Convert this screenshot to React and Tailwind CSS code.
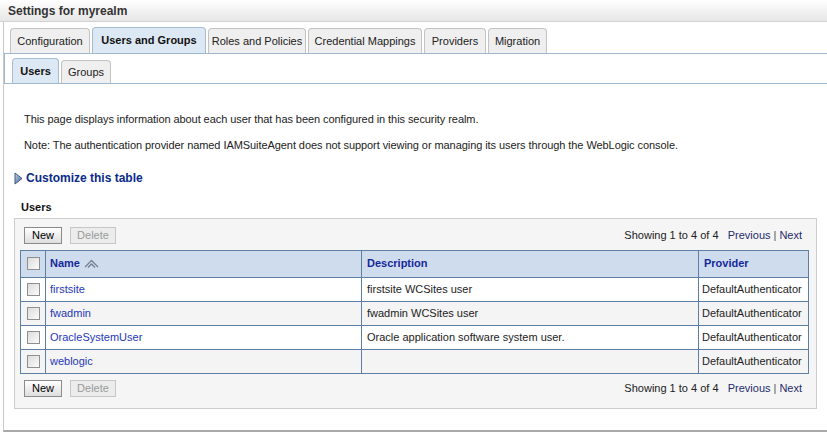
import { useState } from 'react'

const tabs = [
  { label: 'Configuration', w: 'w-[80px]' },
  { label: 'Users and Groups', w: 'w-[114px]' },
  { label: 'Roles and Policies', w: 'w-[98px]' },
  { label: 'Credential Mappings', w: 'w-[114px]' },
  { label: 'Providers', w: 'w-[62px]' },
  { label: 'Migration', w: 'w-[59px]' },
]

const subTabs = [
  { label: 'Users', w: 'w-[47px]' },
  { label: 'Groups', w: 'w-[50px]' },
]

const users = [
  { name: 'firstsite', desc: 'firstsite WCSites user', provider: 'DefaultAuthenticator' },
  { name: 'fwadmin', desc: 'fwadmin WCSites user', provider: 'DefaultAuthenticator' },
  { name: 'OracleSystemUser', desc: 'Oracle application software system user.', provider: 'DefaultAuthenticator' },
  { name: 'weblogic', desc: '', provider: 'DefaultAuthenticator' },
]

function Checkbox() {
  return (
    <span className="block w-[13px] h-[13px] border border-[#8e8f8f] bg-gradient-to-br from-[#dcdcdc] to-[#fbfbfb]" />
  )
}

function SortIcon() {
  return (
    <svg width="15" height="10" viewBox="0 0 15 10" className="ml-[4px]">
      <path d="M1 8 L7.5 1.5 L14 8" fill="none" stroke="#6f7f95" strokeWidth="1.3" strokeLinejoin="round" />
      <path d="M4 8.5 L7.5 5 L11 8.5" fill="none" stroke="#6f7f95" strokeWidth="1.3" strokeLinejoin="round" />
    </svg>
  )
}

function ButtonBar() {
  return (
    <div className="flex items-center justify-between">
      <div className="flex items-center gap-[8px]">
        <button className="h-[17px] w-[38px] border border-[#8b8b8b] bg-gradient-to-b from-[#ffffff] to-[#dedede] text-[11px] text-black leading-none">
          New
        </button>
        <button disabled className="h-[17px] w-[46px] border border-[#c6c6c6] bg-[#ececec] text-[11px] text-[#9a9a9a] leading-none">
          Delete
        </button>
      </div>
      <div className="text-[11px] text-[#222] pr-[7px]">
        Showing 1 to 4 of 4&nbsp;&nbsp; <span className="text-[#1f2b6e]">Previous</span>
        <span className="mx-[3px] text-[#555]">|</span>
        <span className="text-[#1f2b6e]">Next</span>
      </div>
    </div>
  )
}

export default function App() {
  const [active, setActive] = useState('Users and Groups')
  const [sub, setSub] = useState('Users')

  return (
    <div className="w-[827px] h-[432px] bg-white overflow-hidden" style={{ fontFamily: '"Liberation Sans", Arial, sans-serif' }}>
      {/* Title bar */}
      <div className="h-[22px] bg-gradient-to-b from-white to-[#e6e6e6] border-b border-[#d3d3d3] flex items-center pl-[8px]">
        <span className="text-[12px] font-bold text-[#333]">Settings for myrealm</span>
      </div>

      {/* Page frame */}
      <div className="ml-[3px] h-[410px] border-l border-b-2 border-l-[#c9c9c9] border-b-[#a9a9a9]">
        {/* Main tabs */}
        <div className="flex items-end gap-[2px] pl-[6px] pt-[5px] border-b border-[#9fb8cd]">
          {tabs.map((t) => {
            const on = t.label === active
            return (
              <button
                key={t.label}
                onClick={() => setActive(t.label)}
                className={
                  on
                    ? `${t.w} h-[26px] rounded-t-[4px] border border-b-0 border-[#a6bdd1] bg-[#dce8f4] text-[11px] font-bold text-[#111] whitespace-nowrap`
                    : `${t.w} h-[25px] rounded-t-[4px] border border-b-0 border-[#c3c3c3] bg-[#efefef] text-[11px] text-[#222] whitespace-nowrap`
                }
              >
                {t.label}
              </button>
            )
          })}
        </div>

        {/* Sub tabs */}
        <div className="flex items-end gap-[2px] pl-[7px] pt-[4px] border-l border-b border-[#9fb8cd]">
          {subTabs.map((t) => {
            const on = t.label === sub
            return (
              <button
                key={t.label}
                onClick={() => setSub(t.label)}
                className={
                  on
                    ? `${t.w} h-[25px] rounded-t-[4px] border border-b-0 border-[#a6bdd1] bg-[#dce8f4] text-[11px] font-bold text-[#111]`
                    : `${t.w} h-[23px] rounded-t-[4px] border border-b-0 border-[#c3c3c3] bg-[#efefef] text-[11px] text-[#222]`
                }
              >
                {t.label}
              </button>
            )
          })}
        </div>

        {/* Intro text */}
        <div className="pl-[20px] pt-[28px] text-[11px] text-[#222] leading-[14px] tracking-[-0.07px]">
          <p>This page displays information about each user that has been configured in this security realm.</p>
          <p className="mt-[12px]">
            Note: The authentication provider named IAMSuiteAgent does not support viewing or managing its users through the WebLogic console.
          </p>
        </div>

        {/* Customize */}
        <div className="flex items-center gap-[3px] pl-[10px] mt-[17px]">
          <svg width="9" height="13" viewBox="0 0 9 13">
            <defs>
              <linearGradient id="tri" x1="0" y1="0" x2="1" y2="1">
                <stop offset="0" stopColor="#c9d6ea" />
                <stop offset="1" stopColor="#3d5a8f" />
              </linearGradient>
            </defs>
            <path d="M1 1 L8 6.5 L1 12 Z" fill="url(#tri)" stroke="#3f5683" strokeWidth="1" strokeLinejoin="round" />
          </svg>
          <span className="text-[12px] font-bold text-[#0a2a8a]">Customize this table</span>
        </div>

        {/* Users section */}
        <div className="pl-[17px] mt-[12px] text-[11px] font-bold text-[#111]">Users</div>

        <div className="ml-[10px] mr-[10px] mt-[2px] bg-[#f5f5f5] border border-[#cdcdcd] pt-[8px] pb-[11px] pl-[5px] pr-[7px]">
          <div className="pl-[4px]">
            <ButtonBar />
          </div>

          <table className="w-[789px] mt-[6px] border-collapse text-[11px]">
            <thead>
              <tr className="h-[27px] bg-[#cfdcee]">
                <th className="w-[25px] border border-[#5d7fa3]">
                  <div className="flex justify-center"><Checkbox /></div>
                </th>
                <th className="w-[316px] border border-[#5d7fa3] text-left pl-[4px]">
                  <div className="flex items-center font-bold text-[#14289a] text-[11px]">
                    Name <SortIcon />
                  </div>
                </th>
                <th className="w-[337px] border border-[#5d7fa3] text-left pl-[5px] font-bold text-[#14289a]">Description</th>
                <th className="border border-[#5d7fa3] text-left pl-[5px] font-bold text-[#14289a]">Provider</th>
              </tr>
            </thead>
            <tbody>
              {users.map((u, i) => (
                <tr key={u.name} className={i % 2 === 0 ? 'h-[24px] bg-white' : 'h-[24px] bg-[#f4f4f4]'}>
                  <td className="border border-[#5d7fa3]">
                    <div className="flex justify-center"><Checkbox /></div>
                  </td>
                  <td className="border border-[#5d7fa3] pl-[4px] text-[#2538b8]">{u.name}</td>
                  <td className="border border-[#5d7fa3] pl-[5px] text-[#222]">{u.desc}</td>
                  <td className="border border-[#5d7fa3] pl-[3px] text-[#222]">{u.provider}</td>
                </tr>
              ))}
            </tbody>
          </table>

          <div className="pl-[4px] mt-[6px]">
            <ButtonBar />
          </div>
        </div>
      </div>
    </div>
  )
}
